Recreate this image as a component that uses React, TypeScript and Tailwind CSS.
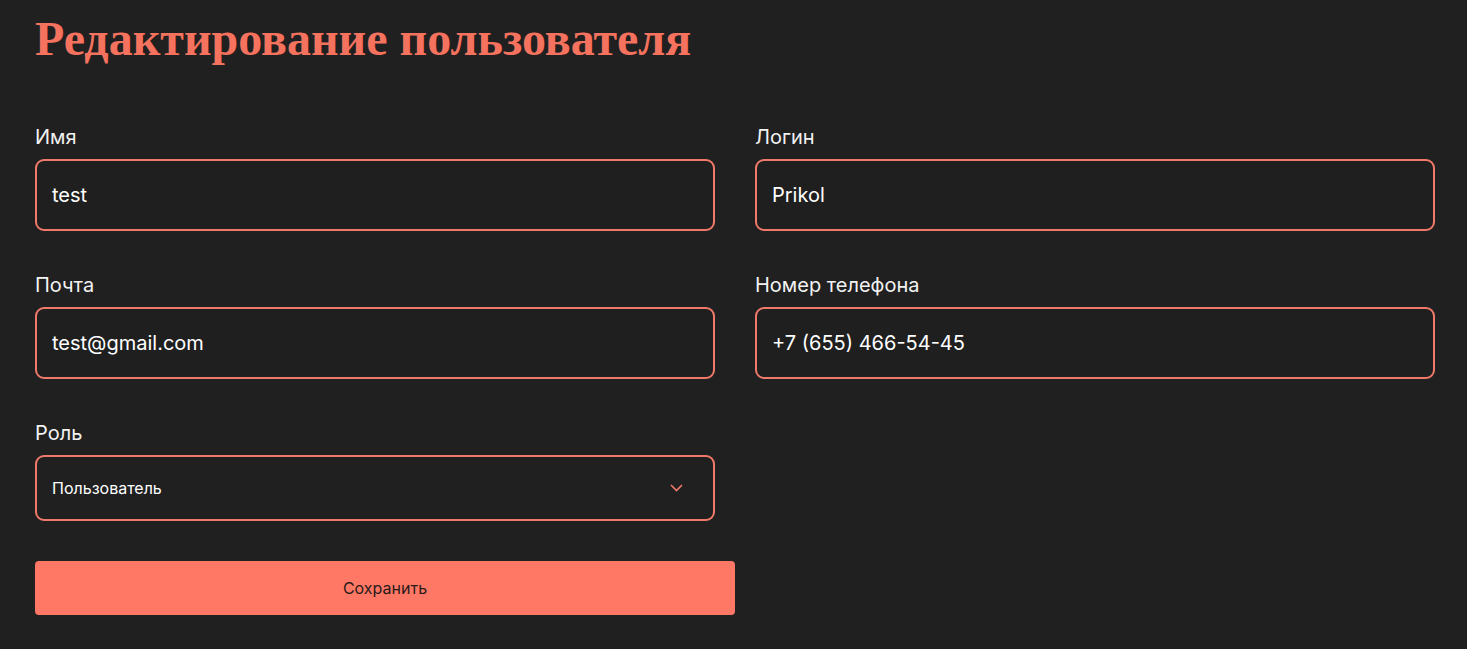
import { useState } from "react";

const sans = { fontFamily: "Inter, 'Noto Sans', sans-serif" };

function Field({
  label,
  value,
  onChange,
  autoFocus,
}: {
  label: string;
  value: string;
  onChange: (v: string) => void;
  autoFocus?: boolean;
}) {
  return (
    <label className="flex flex-col gap-[10px]">
      <span className="text-[20px] leading-[24px] text-[#f2f2f2]">{label}</span>
      <input
        value={value}
        autoFocus={autoFocus}
        onChange={(e) => onChange(e.target.value)}
        className="h-[72px] w-full rounded-[9px] border-2 border-[#f0796a] bg-[#1f1f1f] px-[15px] text-[20px] text-white caret-white outline-none"
        style={sans}
      />
    </label>
  );
}

export default function App() {
  const [form, setForm] = useState({
    name: "test",
    login: "Prikol",
    email: "test@gmail.com",
    phone: "+7 (655) 466-54-45",
  });

  return (
    <div className="min-h-[649px] bg-[#202020] px-[35px] pt-[12px]" style={sans}>
      <h1
        className="text-[48px] font-bold leading-[54px] text-[#f5725e]"
        style={{ fontFamily: "'Liberation Serif', 'DejaVu Serif', serif" }}
      >
        Редактирование пользователя
      </h1>

      <div className="mt-[59px] grid w-[1400px] grid-cols-2 gap-x-[40px] gap-y-[42px]">
        <Field
          label="Имя"
          value={form.name}
          autoFocus
          onChange={(v) => setForm({ ...form, name: v })}
        />
        <Field label="Логин" value={form.login} onChange={(v) => setForm({ ...form, login: v })} />
        <Field label="Почта" value={form.email} onChange={(v) => setForm({ ...form, email: v })} />
        <Field
          label="Номер телефона"
          value={form.phone}
          onChange={(v) => setForm({ ...form, phone: v })}
        />
        <div className="flex flex-col gap-[10px]">
          <span className="text-[20px] leading-[24px] text-[#f2f2f2]">Роль</span>
          <div className="flex h-[66px] items-center justify-between rounded-[9px] border-2 border-[#f0796a] pl-[15px] pr-[30px]">
            <span className="text-[16px] text-white">Пользователь</span>
            <svg width="13" height="8" viewBox="0 0 13 8" fill="none">
              <path d="M1 1l5.5 5.5L12 1" stroke="#f0796a" strokeWidth="1.6" />
            </svg>
          </div>
        </div>
      </div>

      <button className="mt-[40px] h-[54px] w-[700px] rounded-[4px] bg-[#ff7866] text-[16px] text-[#2a1a18]">
        Сохранить
      </button>
    </div>
  );
}
